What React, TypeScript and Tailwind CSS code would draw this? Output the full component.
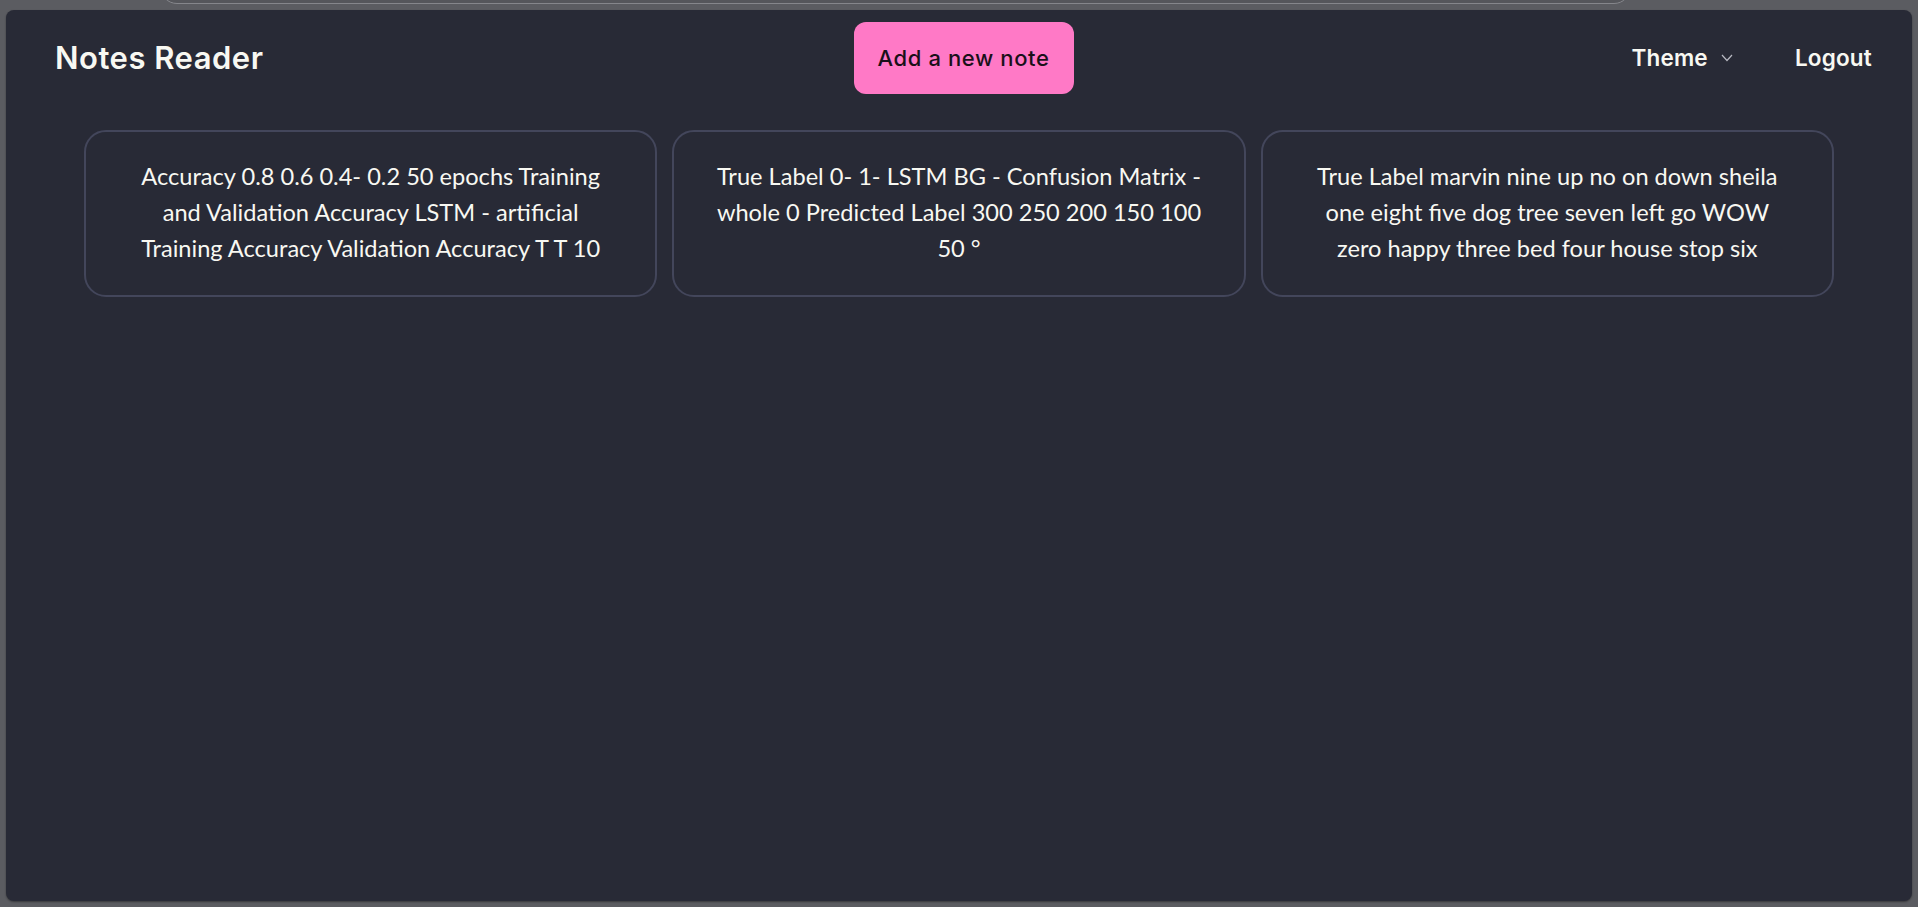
import React from 'react';

const notes: string[][] = [
  [
    'Accuracy 0.8 0.6 0.4- 0.2 50 epochs Training',
    'and Validation Accuracy LSTM - artificial',
    'Training Accuracy Validation Accuracy T T 10',
  ],
  [
    'True Label 0- 1- LSTM BG - Confusion Matrix -',
    'whole 0 Predicted Label 300 250 200 150 100',
    '50 °',
  ],
  [
    'True Label marvin nine up no on down sheila',
    'one eight five dog tree seven left go WOW',
    'zero happy three bed four house stop six',
  ],
];

function NoteCard({ lines }: { lines: string[] }) {
  return (
    <div className="border-2 border-[#43465b] rounded-[22px] h-[167px] pb-1 flex flex-col items-center justify-center text-center text-[#f8f8f2] text-[23.6px] leading-[36px] font-['Segoe_UI','Lato','Noto_Sans',sans-serif]">
      {lines.map((l, i) => (
        <span key={i} className="block whitespace-nowrap">{l}</span>
      ))}
    </div>
  );
}

export default function App() {
  return (
    <div className="relative h-screen w-full overflow-hidden bg-[#5b5c61] flex flex-col pt-[10px] px-[6px] pb-[6px]">
      {/* browser search pill peeking at the top */}
      <div className="absolute left-[160px] top-[-30px] w-[1471px] h-[34px] rounded-full border border-[#85868b] bg-[#55565b]"></div>

      <div className="flex-1 bg-[#282a36] rounded-lg shadow-[0_1px_2px_rgba(0,0,0,0.4)] flex flex-col">
        <header className="flex items-center pt-3 px-[40px] font-['Inter',sans-serif]">
          <div className="flex-1 pl-[9px]">
            <span className="text-[#f8f8f2] text-[31px] font-semibold tracking-[0.5px]">Notes Reader</span>
          </div>
          <button className="h-[72px] w-[220px] rounded-xl bg-[#ff79c6] text-[#1a1019] text-[22px] font-medium tracking-[0.6px]">
            Add a new note
          </button>
          <div className="flex-1 flex items-center justify-end text-[#f8f8f2] text-[22.5px] font-semibold tracking-[0.2px]">
            <button className="flex items-center gap-[13px]">
              <span>Theme</span>
              <svg width="12" height="8" viewBox="0 0 12 8" fill="none" stroke="#b8b9c2" strokeWidth="1.2">
                <polyline points="1,1 6,6.5 11,1" />
              </svg>
            </button>
            <button className="ml-[62px]">Logout</button>
          </div>
        </header>

        <div className="grid grid-cols-3 gap-[15px] px-[78px] mt-[36px]">
          {notes.map((n, i) => (
            <NoteCard key={i} lines={n} />
          ))}
        </div>
      </div>
    </div>
  );
}
